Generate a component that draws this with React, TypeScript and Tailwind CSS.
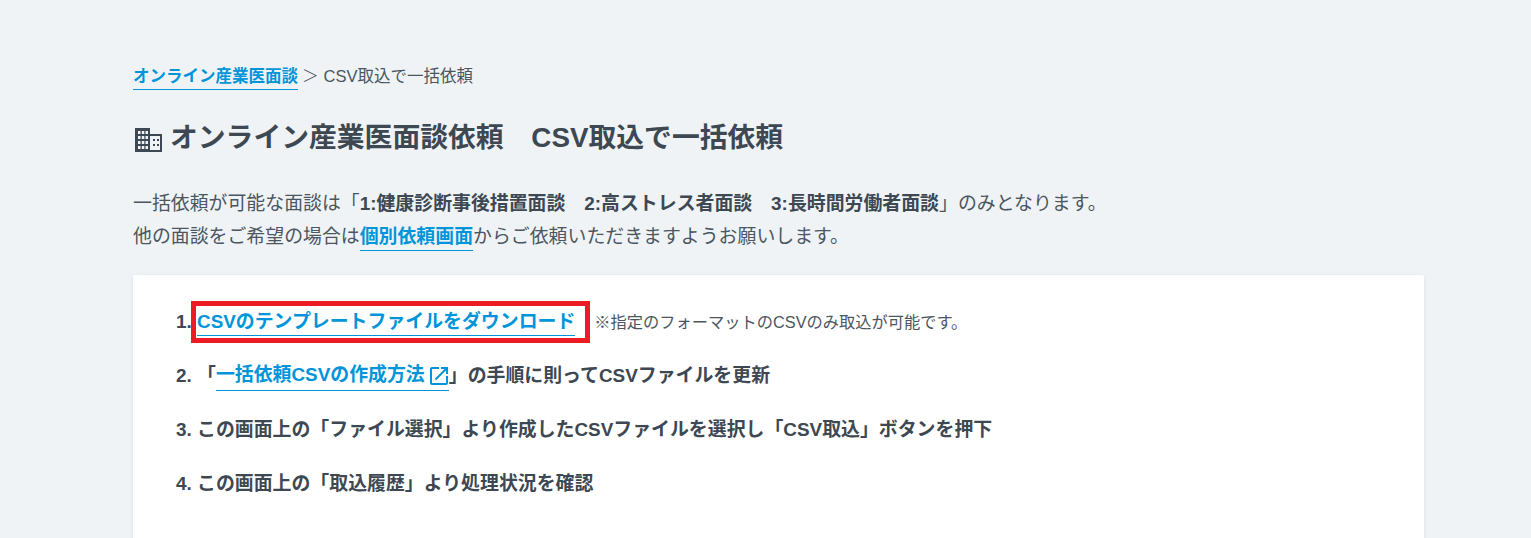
const font = { fontFamily: '"Liberation Sans", "Noto Sans CJK JP", sans-serif' };

const BuildingIcon = () => (
  <svg width="27" height="24" viewBox="0 0 27 24" className="ml-[2px] mt-[4px] shrink-0 text-[#3d4852]" fill="currentColor">
    <path
      fillRule="evenodd"
      d="M0 0h15v6h12v18H0V0zM3 3v3h2.500V3H3zm3.800 0v3h2.500V3H6.800zM10.500 3v3H13V3h-2.500zM3 8v3h2.500V8H3zm3.800 0v3h2.500V8H6.800zM10.500 8v3H13V8h-2.500zM3 13v3h2.500v-3H3zm3.800 0v3h2.500v-3H6.800zM10.500 13v3H13v-3h-2.500zM3 18v3h2.500v-3H3zm3.800 0v3h2.500v-3H6.800zM10.500 18v3H13v-3h-2.500zM15 8v14h10V8H15z"
    />
    <path d="M18 11h2v2h-2zM22 11h2v2h-2zM18 16h2v2h-2zM22 16h2v2h-2z" />
  </svg>
);

const OpenInNewIcon = () => (
  <svg width="18" height="18" viewBox="3 3 18 18" fill="currentColor" className="shrink-0">
    <path d="M19 19H5V5h7V3H5c-1.11 0-2 .9-2 2v14c0 1.1.89 2 2 2h14c1.1 0 2-.9 2-2v-7h-2v7zM14 3v2h3.59l-9.83 9.83 1.41 1.41L19 6.41V10h2V3h-7z" />
  </svg>
);

const steps = [
  "この画面上の「ファイル選択」より作成したCSVファイルを選択し「CSV取込」ボタンを押下",
  "この画面上の「取込履歴」より処理状況を確認",
];

export default function App() {
  return (
    <div style={font} className="h-screen overflow-hidden bg-[#eff3f6] pl-[133px] pr-[107px] pt-[62px] text-[#3d4852]">
      <nav className="h-[28px] text-[16.5px] leading-[29px]">
        <a className="border-b border-[#0095d9] pb-[4px] font-bold text-[#0095d9]">オンライン産業医面談</a>
        <span className="ml-[4px] font-light">＞</span>
        <span className="ml-[5px] text-[#4b5660]">CSV取込で一括依頼</span>
      </nav>

      <h1 className="mt-[28px] flex h-[40px] items-center gap-[8px] text-[27.8px] font-bold">
        <BuildingIcon />
        オンライン産業医面談依頼　CSV取込で一括依頼
      </h1>

      <div className="mt-[29px] text-[18.9px] leading-[33px] text-[#4b5660]">
        <p>
          一括依頼が可能な面談は「<b className="text-[#3d4852]">1:健康診断事後措置面談　2:高ストレス者面談　3:長時間労働者面談</b>」のみとなります。
        </p>
        <p>
          他の面談をご希望の場合は<a className="border-b border-[#0095d9] pb-[3px] font-bold text-[#0095d9]">個別依頼画面</a>からご依頼いただきますようお願いします。
        </p>
      </div>

      <section className="mt-[22px] h-[400px] rounded-[2px] bg-white pl-[43px] pt-[33px] shadow-[0_1px_4px_rgba(0,0,0,0.08)]">
        <ol className="flex flex-col gap-[26px] text-[18.9px] font-bold">
          <li className="flex h-[28px] items-center">
            <span className="w-[21px]">1.</span>
            <span className="relative">
              <a className="border-b border-[#0095d9] pb-[3px] text-[#0095d9]">CSVのテンプレートファイルをダウンロード</a>
              <span className="absolute -bottom-[7px] -left-[6px] -right-[15px] -top-[7px] border-[5px] border-[#ed1c24]" />
            </span>
            <span className="ml-[19px] text-[16.25px] font-normal text-[#4b5660]">※指定のフォーマットのCSVのみ取込が可能です。</span>
          </li>
          <li className="flex h-[28px] items-center">
            <span>2. 「</span>
            <a className="flex items-center gap-[5px] border-b border-[#0095d9] pr-[1px] text-[#0095d9]">
              一括依頼CSVの作成方法
              <OpenInNewIcon />
            </a>
            <span>」の手順に則ってCSVファイルを更新</span>
          </li>
          {steps.map((text, i) => (
            <li key={text} className="flex h-[28px] items-center">
              {i + 3}. {text}
            </li>
          ))}
        </ol>
      </section>
    </div>
  );
}
